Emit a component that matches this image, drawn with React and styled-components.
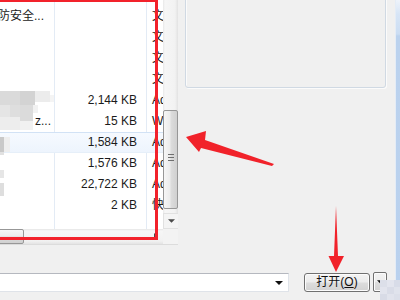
import React from 'react';
import styled, { createGlobalStyle, css } from 'styled-components';

const GlobalStyle = createGlobalStyle`
  html, body {
    margin: 0;
    padding: 0;
    background: #f0f0f0;
  }
  body {
    width: 400px;
    height: 300px;
    overflow: hidden;
    font-family: "Liberation Sans", "Noto Sans CJK SC", sans-serif;
    font-size: 12px;
    color: #1b1b1b;
  }
`;

const Dialog = styled.div`
  position: relative;
  width: 400px;
  height: 300px;
  display: flex;
  background: #f0f0f0;
  overflow: hidden;
`;

const Body = styled.div`
  width: 395px;
  flex: none;
  display: flex;
  flex-direction: column;
`;

const WindowEdge = styled.div`
  flex: 1;
  border-left: 1px solid #e4ecf6;
  background: linear-gradient(
    180deg,
    #eef3fa 0,
    #d7e5f6 14px,
    #cbddf3 34px,
    #bbd2ee 36px,
    #b9d1ee 100%
  );
`;

const TopArea = styled.div`
  display: flex;
  align-items: flex-start;
  height: 245px;
`;

const FilePane = styled.div`
  width: 178px;
  flex: none;
  display: grid;
  grid-template-columns: 163px 15px;
  grid-template-rows: 229px 15px;
  border-bottom: 1px solid #dcdcdc;
  background: #fff;
`;

const List = styled.div`
  padding-top: 6px;
  overflow: hidden;
  background:
    linear-gradient(90deg, transparent 54px, #e3ebf5 54px, #e3ebf5 55px, transparent 55px),
    linear-gradient(90deg, transparent 146px, #e3ebf5 146px, #e3ebf5 147px, transparent 147px),
    #fff;
`;

const Row = styled.div`
  display: grid;
  grid-template-columns: 54px 92px 17px;
  height: 21px;
  line-height: 21px;
  white-space: nowrap;

  ${({ $hover }) =>
    $hover &&
    css`
      background: linear-gradient(180deg, #f6faff, #edf4fd);
      box-shadow: inset 0 1px 0 #d2e2f5, inset 0 -1px 0 #e6eff9;
    `}
`;

const NameCell = styled.span`
  overflow: hidden;
  padding-left: ${({ $indent }) => $indent}px;
`;

const SizeCell = styled.span`
  text-align: right;
  padding-right: 9px;
`;

const TypeCell = styled.span`
  overflow: hidden;
  padding-left: 6px;
`;

const VScroll = styled.div`
  display: flex;
  flex-direction: column;
  align-items: stretch;
  background: linear-gradient(90deg, #e8e8e8 0, #f6f6f6 2px, #f2f2f2 12px, #e2e2e2 15px);
`;

const VThumb = styled.div`
  position: relative;
  margin-top: 110px;
  height: 97px;
  border: 1px solid #979797;
  border-radius: 2px;
  background: linear-gradient(90deg, #f6f6f6 0, #ececec 45%, #dcdcdc 55%, #d0d0d0 100%);

  &::after {
    content: '';
    position: absolute;
    left: 4px;
    top: 43px;
    width: 6px;
    height: 7px;
    background: repeating-linear-gradient(180deg, #6f6f6f 0 1px, transparent 1px 3px);
  }
`;

const ArrowButton = styled.div`
  margin-top: 4px;
  height: 14px;
  display: flex;
  align-items: center;
  justify-content: center;
  border: 1px solid #e1e1e1;
  border-right: none;
  background: #f4f4f4;
`;

const HScroll = styled.div`
  display: flex;
  align-items: stretch;
  background: linear-gradient(180deg, #e6e6e6 0, #f6f6f6 2px, #f1f1f1 12px, #e4e4e4 15px);
`;

const HThumb = styled.div`
  width: 30px;
  margin-left: -8px;
  border: 1px solid #979797;
  border-radius: 2px;
  background: linear-gradient(180deg, #f6f6f6 0, #ececec 45%, #dcdcdc 55%, #d0d0d0 100%);
`;

const HTrack = styled.div`
  flex: 1;
`;

const HArrow = styled.div`
  width: 15px;
  display: flex;
  align-items: center;
  justify-content: center;
`;

const Corner = styled.div`
  background: #f3f3f3;
`;

const Preview = styled.div`
  margin: -4px 0 0 7px;
  width: 199px;
  height: 90px;
  border: 1px solid #d0d9e3;
  border-radius: 3px;
  box-shadow: inset 1px 1px 0 #fbfbfb, 1px 1px 0 #fbfbfb;
`;

const Footer = styled.div`
  display: flex;
  align-items: flex-start;
  margin-top: 28px;
`;

const FileInput = styled.div`
  width: 292px;
  height: 19px;
  margin-left: -3px;
  flex: none;
  display: flex;
  align-items: center;
  justify-content: flex-end;
  padding-right: 5px;
  box-sizing: border-box;
  background: #fff;
  border: 1px solid #dfe3e9;
  border-top-color: #b5b8bf;
`;

const OpenButton = styled.div`
  margin-left: 15px;
  width: 66px;
  height: 19px;
  box-sizing: border-box;
  border: 1px solid #707070;
  border-radius: 3px;
  background: linear-gradient(180deg, #f3f3f3 0, #ececec 48%, #dddddd 52%, #d2d2d2 100%);
  box-shadow: inset 0 0 0 1px #fcfcfc;
  display: flex;
  align-items: center;
  justify-content: center;
  line-height: 17px;
  color: #111;

  u {
    text-decoration-thickness: 1px;
    text-underline-offset: 1px;
  }
`;

const SplitButton = styled(OpenButton)`
  margin-left: 3px;
  width: 14px;
  height: 20px;
  margin-top: -1px;
  border-radius: 2px;
`;

const Overlay = styled.svg`
  position: absolute;
  inset: 0;
  width: 400px;
  height: 300px;
  pointer-events: none;
`;

const RedFrame = styled.div`
  position: absolute;
  left: -5px;
  top: -1px;
  width: 157px;
  height: 235px;
  border: 3px solid #f2222b;
`;

const DownTriangle = ({ size = 7, color = '#333' }) => (
  <svg width={size} height={Math.ceil(size / 2)} viewBox="0 0 8 4">
    <path d="M0 0h8L4 4z" fill={color} />
  </svg>
);

const rows = [
  { name: '防安全...', indent: 0, shift: -2, type: '文件夹' },
  { type: '文件夹' },
  { type: '文件夹' },
  { type: '文件夹' },
  { size: '2,144 KB', type: 'Ado' },
  { name: 'z...', indent: 35, size: '15 KB', type: 'Wi' },
  { size: '1,584 KB', type: 'Ado', hover: true },
  { size: '1,576 KB', type: 'Ado' },
  { size: '22,722 KB', type: 'Ado' },
  { size: '2 KB', type: '快捷方式' },
];

const mosaic = [
  [0, 91, 20, 14, '#dadada'],
  [20, 91, 15, 14, '#d3d3d3'],
  [35, 91, 15, 11, '#ececec'],
  [50, 95, 4, 7, '#f4f4f4'],
  [0, 105, 10, 12, '#e5e5e5'],
  [10, 105, 10, 12, '#dedede'],
  [20, 105, 13, 16, '#dbdbdb'],
  [33, 105, 5, 8, '#f1f1f1'],
  [0, 117, 20, 13, '#ededed'],
  [20, 121, 13, 9, '#f1f1f1'],
  [0, 137, 4, 15, '#c9c9c9'],
  [4, 137, 6, 15, '#eeeeee'],
  [0, 152, 4, 3, '#e1e1e1'],
  [0, 170, 4, 8, '#e6e6e6'],
  [0, 183, 4, 13, '#dedede'],
  [380, 280, 7, 7, '#dcdfe9'],
  [387, 280, 7, 7, '#e3e5ee'],
  [394, 280, 6, 7, '#d8dce8'],
  [380, 287, 7, 7, '#e2e4ed'],
  [387, 287, 7, 7, '#d9dce7'],
  [394, 287, 6, 7, '#e0e3ec'],
  [380, 294, 7, 6, '#d8dbe6'],
  [387, 294, 7, 6, '#e1e3ec'],
  [394, 294, 6, 6, '#dcdfe9'],
];

export default function App() {
  return (
    <>
      <GlobalStyle />
      <Dialog>
        <Body>
          <TopArea>
            <FilePane>
              <List>
                {rows.map((r, i) => (
                  <Row key={i} $hover={r.hover}>
                    <NameCell $indent={r.indent || 0}>
                      {r.name && <span style={{ marginLeft: r.shift || 0 }}>{r.name}</span>}
                    </NameCell>
                    <SizeCell>{r.size}</SizeCell>
                    <TypeCell>{r.type}</TypeCell>
                  </Row>
                ))}
              </List>
              <VScroll>
                <VThumb />
                <ArrowButton>
                  <DownTriangle size={7} color="#4a4a4a" />
                </ArrowButton>
              </VScroll>
              <HScroll>
                <HThumb />
                <HTrack />
                <HArrow>
                  <svg width="4" height="7" viewBox="0 0 4 7">
                    <path d="M0 0l4 3.5L0 7z" fill="#4a4a4a" />
                  </svg>
                </HArrow>
              </HScroll>
              <Corner />
            </FilePane>
            <Preview />
          </TopArea>
          <Footer>
            <FileInput>
              <DownTriangle size={8} color="#111" />
            </FileInput>
            <OpenButton>
              打开(<u>O</u>)
            </OpenButton>
            <SplitButton>
              <DownTriangle size={7} color="#111" />
            </SplitButton>
          </Footer>
        </Body>
        <WindowEdge />
        <RedFrame />
        <Overlay viewBox="0 0 400 300">
          {mosaic.map(([x, y, w, h, c], i) => (
            <rect key={i} x={x} y={y} width={w} height={h} fill={c} />
          ))}
          <polygon
            points="186,137 206,131 205,140 274,164 272,166 201,148 199,152"
            fill="#f1222a"
          />
          <polygon
            points="336,206 338,256 344,256 336,272 328.5,256 334,256"
            fill="#f1222a"
          />
        </Overlay>
      </Dialog>
    </>
  );
}
